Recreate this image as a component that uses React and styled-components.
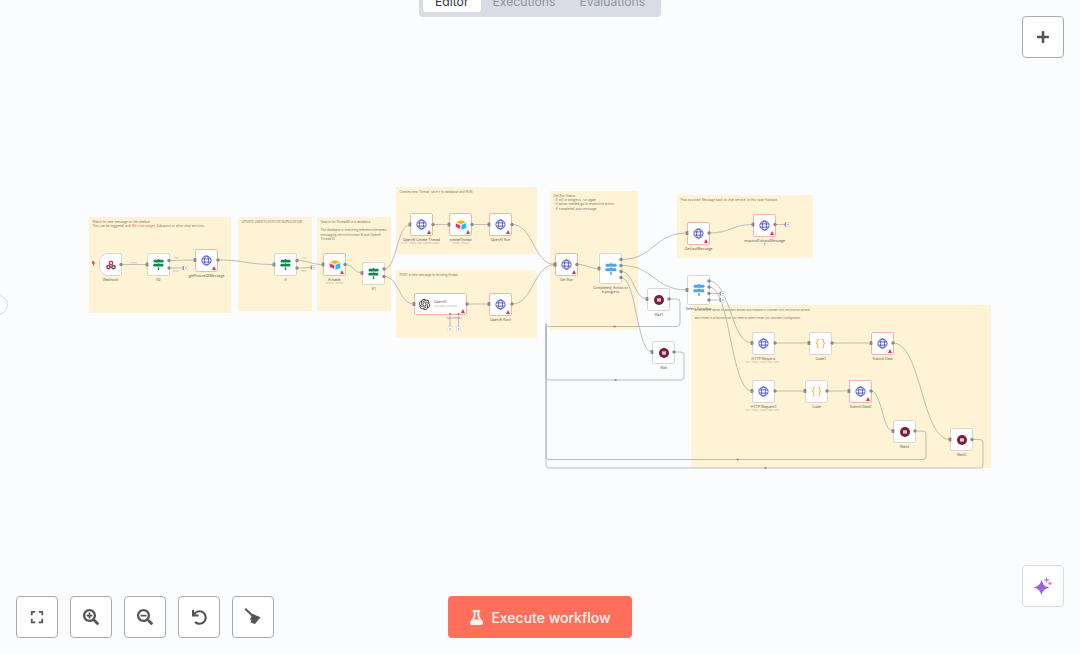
import React from 'react';
import styled, { createGlobalStyle } from 'styled-components';
import {
    FaExpand,
    FaSearchPlus,
    FaSearchMinus,
    FaUndo,
    FaPlus,
    FaFlask,
    FaMapSigns,
    FaBolt,
    FaPause,
} from 'react-icons/fa';
import { SiOpenai } from 'react-icons/si';

const Accent = styled.span`
    color: #e8604f;
`;

const notes = [
    { x: 89, y: 217, w: 142, h: 96, lines: ['Watch for new message on the chatbot', <>This can be triggered with <Accent>Mfr chat widget</Accent>, Subspecs or other chat services.</>] },
    { x: 238, y: 217, w: 74, h: 94, lines: ['UPDATE USER FILTER FOR DUPLICATION'] },
    { x: 317, y: 217, w: 74, h: 94, lines: ['Search for ThreadID in a database', '\u00a0', 'The database is matching reference between messaging service/contact & and OpenAI Thread ID.'] },
    { x: 396, y: 187, w: 141, h: 67, lines: ['Creates new Thread, save it to database and RUN'] },
    { x: 396, y: 270, w: 141, h: 68, lines: ['POST a new message to existing thread'] },
    { x: 550, y: 191, w: 88, h: 139, lines: ['Get Run Status:', '- If still in progress, run again', '- If action needed go to respective action', '- If completed, post message'] },
    { x: 677, y: 195, w: 136, h: 63, lines: ['Post assistant Message back to chat service. In this case Hubspot'] },
    { x: 691, y: 305, w: 300, h: 163, small: true, lines: ['Select a form based on assistant answer and respond to Assistant with the function answer.', '\u00a0', 'Each model is a function that you need to define inside your assistant configuration.'] },
];

const nodes = [
    { x: 99, y: 253, icon: 'webhook', label: 'Webhook', trigger: true },
    { x: 147, y: 253, icon: 'if', label: 'If2' },
    { x: 195, y: 249, icon: 'globe', label: 'getPictureOfMessage', error: true },
    { x: 274, y: 253, icon: 'if', label: 'If' },
    { x: 323, y: 253, icon: 'airtable', label: 'Airtable', sub: 'search: record', error: true },
    { x: 362, y: 262, icon: 'if', label: 'If1' },
    { x: 410, y: 213, icon: 'globe', label: 'OpenAI Create Thread', sub: 'POST: https://api.openai.com/v...', error: true },
    { x: 449, y: 213, icon: 'airtable', label: 'createThread', sub: 'create: record', error: true },
    { x: 489, y: 213, icon: 'globe', label: 'OpenAI Run', error: true },
    { x: 489, y: 293, icon: 'globe', label: 'OpenAI Run1', error: true },
    { x: 555, y: 253, icon: 'globe', label: 'Get Run', error: true },
    { x: 599, y: 253, h: 31, icon: 'switch', label: 'Completed, Action or\nInprogress' },
    { x: 647, y: 288, icon: 'wait', label: 'Wait1' },
    { x: 652, y: 341, icon: 'wait', label: 'Wait' },
    { x: 687, y: 222, icon: 'globe', label: 'GetLastMessage', error: true },
    { x: 753, y: 214, icon: 'globe', label: 'respondToInputMessage\n1', error: true },
    { x: 687, y: 275, h: 30, icon: 'switch', label: 'Select Function' },
    { x: 752, y: 332, icon: 'globe', label: 'HTTP Request', sub: 'GET: https://www.tidio.com/...' },
    { x: 809, y: 332, icon: 'code', label: 'Code1' },
    { x: 871, y: 332, icon: 'globe', label: 'Submit Data', error: true },
    { x: 752, y: 380, icon: 'globe', label: 'HTTP Request1', sub: 'GET: https://www.tidio.com/...' },
    { x: 805, y: 380, icon: 'code', label: 'Code' },
    { x: 849, y: 380, icon: 'globe', label: 'Submit Data1', error: true },
    { x: 893, y: 420, icon: 'wait', label: 'Wait3' },
    { x: 950, y: 428, icon: 'wait', label: 'Wait2' },
];

const wires = [
    [121, 264.5, 147, 264.5],
    [169, 260.5, 195, 260],
    [169, 268, 184, 268],
    [218, 260, 274, 264.5],
    [297, 260.5, 323, 264.5],
    [297, 268, 312, 267.5],
    [345, 264.5, 362, 273],
    [384, 269, 410, 224.5],
    [384, 276.5, 414, 304],
    [433, 224.5, 449, 224.5],
    [472, 224.5, 489, 224.5],
    [512, 224.5, 555, 264.5],
    [467, 304, 489, 304],
    [512, 304, 555, 264.5],
    [577, 264.5, 599, 268.5],
    [621, 259.5, 687, 233],
    [621, 265.5, 687, 290],
    [621, 271.5, 647, 299],
    [621, 277.5, 652, 352],
    [709, 233, 753, 224.5],
    [775, 224.5, 786, 224.5],
    [709, 281, 752, 343],
    [709, 287, 752, 391],
    [709, 293.5, 721, 293.5],
    [709, 300, 721, 300],
    [775, 343, 809, 343],
    [832, 343, 871, 343],
    [775, 391, 805, 391],
    [827, 391, 849, 391],
    [893, 343, 950, 439.5],
    [871, 391, 893, 431],
];

const loops = [
    [669, 299, 680, 326.5, 546],
    [674, 352, 684, 380, 546],
    [915, 431, 926, 459.5, 546],
    [972, 439.5, 983, 468, 546],
];

const pluses = [
    [186, 268],
    [314, 267.5],
    [788, 224.5],
    [723, 293.5],
    [723, 300],
    [450, 329],
    [458.5, 329],
];

const arrows = [
    [614, 326.5],
    [615, 380],
    [737, 459.5],
    [765, 468],
];

const wireLabels = [
    { x: 174, y: 257, text: 'true' },
    { x: 173, y: 270, text: 'false' },
    { x: 302, y: 257, text: 'true' },
    { x: 301, y: 270, text: 'false' },
    { x: 130, y: 262, text: '1 item' },
];

const curve = ([x1, y1, x2, y2]) => {
    const bend = Math.max(Math.abs(x2 - x1) / 2, 6);
    return `M${x1} ${y1} C${x1 + bend} ${y1} ${x2 - bend} ${y2} ${x2} ${y2}`;
};

const loopPath = ([x, y, right, bottom, left]) =>
    `M${x} ${y} H${right - 3} Q${right} ${y} ${right} ${y + 3} V${bottom - 3} Q${right} ${bottom} ${right - 3} ${bottom} H${left + 3} Q${left} ${bottom} ${left} ${bottom - 3} V326`;

function GlobeIcon() {
    return (
        <svg width="11" height="11" viewBox="0 0 24 24" fill="none" stroke="#4a4fcf" strokeWidth="2">
            <circle cx="12" cy="12" r="10" />
            <ellipse cx="12" cy="12" rx="4.5" ry="10" />
            <path d="M3 8.5h18M3 15.5h18" />
        </svg>
    );
}

function WebhookIcon() {
    return (
        <svg width="10" height="10" viewBox="0 0 24 24" fill="none" strokeWidth="3.4">
            <circle cx="12" cy="7" r="4" stroke="#c1426a" />
            <circle cx="6" cy="17" r="4" stroke="#8a3a72" />
            <circle cx="18" cy="17" r="4" stroke="#4a4a55" />
            <path d="M10 10l-3 5M8 17h7M14 10l3 5" stroke="#c1426a" />
        </svg>
    );
}

function AirtableIcon() {
    return (
        <svg width="12" height="11" viewBox="0 0 24 22">
            <path d="M2 6.5L11.5 2.6a2 2 0 0 1 1.3 0L22 6.5 12.3 10.2z" fill="#fcb400" />
            <path d="M13 12l9.5-3.8V18L13 21.6z" fill="#18bfff" />
            <path d="M1.5 8.5L10.5 13 10.5 20 1.5 15.5z" fill="#f82b60" />
        </svg>
    );
}

function BracesIcon() {
    return (
        <svg width="11" height="11" viewBox="0 0 24 24" fill="none" stroke="#ff9b26" strokeWidth="2" strokeLinecap="round">
            <path d="M8 3H7a2 2 0 0 0-2 2v5a2 2 0 0 1-2 2 2 2 0 0 1 2 2v5a2 2 0 0 0 2 2h1" />
            <path d="M16 21h1a2 2 0 0 0 2-2v-5a2 2 0 0 1 2-2 2 2 0 0 1-2-2V5a2 2 0 0 0-2-2h-1" />
        </svg>
    );
}

function SparkleIcon() {
    return (
        <svg width="24" height="24" viewBox="0 0 24 24">
            <defs>
                <linearGradient id="spark" x1="0" y1="0" x2="1" y2="1">
                    <stop offset="0" stopColor="#7a5ee6" />
                    <stop offset="1" stopColor="#b868e0" />
                </linearGradient>
            </defs>
            <path d="M10.5 5.5Q11.300 8.800 12.700 10.800T18.500 13.500Q15 14.300 13 16.200T10.500 21.500Q9.700 18.200 8 16.200T2.500 13.500Q6 12.700 8 10.800T10.500 5.500z" fill="url(#spark)" />
            <path d="M15.700 3.400v5.200M13.100 6h5.200" stroke="#a565dc" strokeWidth="1" />
            <circle cx="19" cy="9.300" r="1.600" fill="#df7fc8" />
        </svg>
    );
}

function BroomIcon() {
    return (
        <svg width="18" height="18" viewBox="0 0 18 18">
            <path d="M1.700 1.300L8.300 7.500" stroke="#555" strokeWidth="2" strokeLinecap="round" />
            <path d="M8.500 5.800L16.500 9.300 11 16 6.500 14.500 7.500 11.500 5.800 12.500z" fill="#555" />
        </svg>
    );
}

const GlobalStyle = createGlobalStyle`
    html, body {
        margin: 0;
        padding: 0;
        background: #fbfcfe;
    }
`;

const Canvas = styled.div`
    position: relative;
    width: 1080px;
    height: 654px;
    overflow: hidden;
    background: #fbfcfe;
    font-family: Inter, 'Liberation Sans', sans-serif;
`;

const Note = styled.div`
    position: absolute;
    left: ${(p) => p.$x}px;
    top: ${(p) => p.$y}px;
    width: ${(p) => p.$w}px;
    height: ${(p) => p.$h}px;
    box-sizing: border-box;
    padding: 3px 3.5px;
    background: #fff3d5;
    border-radius: 1px;
    color: #7b7462;
    font-size: ${(p) => (p.$small ? 2.7 : 3.1)}px;
    line-height: 4.2px;
`;

const Wires = styled.svg`
    position: absolute;
    left: 0;
    top: 0;
    fill: none;
    stroke: #a3a3a3;
    stroke-width: 0.7;
`;

const Ports = styled.svg`
    position: absolute;
    left: 0;
    top: 0;
    fill: #8a8a8a;

    .plus {
        fill: #fff;
        stroke: #c4c4c4;
        stroke-width: 0.4;
    }

    .cross {
        fill: none;
        stroke: #8a8a8a;
        stroke-width: 0.4;
    }
`;

const WireLabel = styled.span`
    position: absolute;
    left: ${(p) => p.$x}px;
    top: ${(p) => p.$y}px;
    color: #c4bca6;
    font-size: 2.4px;
    line-height: 3px;
`;

const TriggerBolt = styled.div`
    position: absolute;
    left: 91px;
    top: 261px;
    display: flex;
`;

const NodeSlot = styled.div`
    position: absolute;
    left: ${(p) => p.$x}px;
    top: ${(p) => p.$y}px;
    width: 23px;
    display: flex;
    flex-direction: column;
    align-items: center;
`;

const NodeBox = styled.div`
    position: relative;
    width: 23px;
    height: ${(p) => p.$h}px;
    flex-shrink: 0;
    box-sizing: border-box;
    display: flex;
    align-items: center;
    justify-content: center;
    background: #fff;
    border: 1.5px solid ${(p) => (p.$error ? '#f4b4a8' : '#d9d7d0')};
    border-radius: ${(p) => (p.$trigger ? '9px 2px 2px 9px' : '2px')};
`;

const ErrorMark = styled.span`
    position: absolute;
    right: 1px;
    bottom: 1px;
    width: 0;
    height: 0;
    border-left: 2.2px solid transparent;
    border-right: 2.2px solid transparent;
    border-bottom: 4px solid #e0344c;
`;

const WaitBadge = styled.span`
    width: 10px;
    height: 10px;
    border-radius: 50%;
    background: #7a1e3c;
    display: flex;
    align-items: center;
    justify-content: center;
`;

const NodeLabel = styled.div`
    margin-top: 2px;
    width: 46px;
    flex-shrink: 0;
    text-align: center;
    color: #5f5c54;
    font-size: 3.5px;
    line-height: 4.2px;
    white-space: pre-line;
`;

const NodeSub = styled.div`
    flex-shrink: 0;
    color: #bcb7aa;
    font-size: 2.6px;
    line-height: 3.4px;
    white-space: nowrap;
`;

const WideNode = styled.div`
    position: absolute;
    left: 414px;
    top: 293px;
    width: 53px;
    height: 22px;
    box-sizing: border-box;
    padding-left: 4px;
    display: flex;
    align-items: center;
    gap: 4px;
    background: #fff;
    border: 1.5px solid #f4b4a8;
    border-radius: 2px;
`;

const WideText = styled.div`
    display: flex;
    flex-direction: column;
`;

const WideTitle = styled.div`
    color: #5f5c54;
    font-size: 3.5px;
    line-height: 5px;
`;

const ToolsLabel = styled.div`
    position: absolute;
    left: 446px;
    top: 317px;
    color: #8f8cc0;
    font-size: 2.4px;
    line-height: 3px;
    white-space: nowrap;
`;

const SideToggle = styled.div`
    position: absolute;
    left: -12px;
    top: 295px;
    width: 20px;
    height: 20px;
    box-sizing: border-box;
    border: 1px solid #d6d8de;
    border-radius: 50%;
    background: #fdfdfe;
`;

const Tabs = styled.div`
    position: absolute;
    left: 419px;
    top: -14px;
    width: 242px;
    height: 30.5px;
    box-sizing: border-box;
    padding: 4px;
    display: flex;
    background: #d9dce5;
    border-radius: 4px;
`;

const Tab = styled.div`
    height: 22px;
    padding: 0 12px;
    display: flex;
    align-items: center;
    border-radius: 3px;
    background: ${(p) => (p.$active ? '#fff' : 'transparent')};
    color: ${(p) => (p.$active ? '#333' : '#8f93a2')};
    font-size: 12.2px;
`;

const SquareButton = styled.button`
    width: 42px;
    height: 42px;
    padding: 0;
    display: flex;
    align-items: center;
    justify-content: center;
    box-sizing: border-box;
    background: #fff;
    border: 1px solid #aaa;
    border-radius: 4px;
    color: #555;
`;

const AddButton = styled(SquareButton)`
    position: absolute;
    right: 16px;
    top: 16px;
`;

const AskButton = styled(SquareButton)`
    position: absolute;
    right: 16px;
    top: 565px;
    border-color: #d9d9de;
`;

const Toolbar = styled.div`
    position: absolute;
    left: 16px;
    bottom: 16px;
    display: flex;
    gap: 12px;
`;

const ExecuteButton = styled.button`
    position: absolute;
    left: 448px;
    top: 596px;
    width: 184px;
    height: 42px;
    display: flex;
    align-items: center;
    justify-content: center;
    gap: 7px;
    border: none;
    border-radius: 4px;
    background: #ff6f5c;
    color: #fff6f3;
    font-family: Inter, 'Liberation Sans', sans-serif;
    font-size: 14px;
    font-weight: 500;
`;

const renderIcon = (icon) => {
    switch (icon) {
        case 'globe':
            return <GlobeIcon />;
        case 'webhook':
            return <WebhookIcon />;
        case 'airtable':
            return <AirtableIcon />;
        case 'code':
            return <BracesIcon />;
        case 'if':
            return <FaMapSigns size={11} color="#0e8a4e" />;
        case 'switch':
            return <FaMapSigns size={12} color="#4aa6f0" />;
        case 'wait':
            return (
                <WaitBadge>
                    <FaPause size={4} color="#fff" />
                </WaitBadge>
            );
        default:
            return null;
    }
};

function WorkflowNode({ x, y, h = 23, icon, label, sub, error, trigger }) {
    return (
        <NodeSlot $x={x} $y={y}>
            <NodeBox $h={h} $error={error} $trigger={trigger}>
                {renderIcon(icon)}
                {error && <ErrorMark />}
            </NodeBox>
            <NodeLabel>{label}</NodeLabel>
            {sub && <NodeSub>{sub}</NodeSub>}
        </NodeSlot>
    );
}

function App() {
    return (
        <Canvas>
            <GlobalStyle />
            {notes.map((note) => (
                <Note key={`${note.x}-${note.y}`} $x={note.x} $y={note.y} $w={note.w} $h={note.h} $small={note.small}>
                    {note.lines.map((line, i) => (
                        <div key={i}>{line}</div>
                    ))}
                </Note>
            ))}

            <Wires width="1080" height="654" viewBox="0 0 1080 654">
                {wires.map((wire) => (
                    <path key={wire.join()} d={curve(wire)} />
                ))}
                {loops.map((loop) => (
                    <path key={loop.join()} d={loopPath(loop)} />
                ))}
                <path d="M450 316V327M458.5 316V327" />
            </Wires>

            {wireLabels.map((item) => (
                <WireLabel key={`${item.x}-${item.y}`} $x={item.x} $y={item.y}>
                    {item.text}
                </WireLabel>
            ))}

            <TriggerBolt>
                <FaBolt size={5} color="#e8485f" />
            </TriggerBolt>

            {nodes.map((node) => (
                <WorkflowNode key={node.label} {...node} />
            ))}

            <WideNode>
                <SiOpenai size={11} color="#222" />
                <WideText>
                    <WideTitle>OpenAI</WideTitle>
                    <NodeSub>Message Assistant</NodeSub>
                </WideText>
                <ErrorMark />
            </WideNode>
            <ToolsLabel>Tools Memory</ToolsLabel>

            <Ports width="1080" height="654" viewBox="0 0 1080 654">
                {wires.map(([x1, y1, x2, y2]) => (
                    <g key={`${x1}-${y1}-${x2}`}>
                        <circle cx={x1} cy={y1} r="1.7" />
                        <rect x={x2 - 1.4} y={y2 - 1.9} width="2.8" height="3.8" />
                    </g>
                ))}
                {loops.map(([x, y]) => (
                    <circle key={`${x}-${y}`} cx={x} cy={y} r="1.7" />
                ))}
                {arrows.map(([x, y]) => (
                    <path key={`${x}-${y}`} d={`M${x - 1.5} ${y}l3 -1.3v2.6z`} />
                ))}
                <path d="M450 312.8l1.3 1.3-1.3 1.3-1.3-1.3zM458.5 312.8l1.3 1.3-1.3 1.3-1.3-1.3z" fill="#7d82c8" />
                {pluses.map(([x, y]) => (
                    <g key={`${x}-${y}`}>
                        <rect className="plus" x={x - 2} y={y - 2} width="4" height="4" rx="0.5" />
                        <path className="cross" d={`M${x - 1} ${y}h2M${x} ${y - 1}v2`} />
                    </g>
                ))}
            </Ports>

            <SideToggle />

            <Tabs>
                <Tab $active>Editor</Tab>
                <Tab>Executions</Tab>
                <Tab>Evaluations</Tab>
            </Tabs>

            <AddButton>
                <FaPlus size={14} />
            </AddButton>
            <AskButton>
                <SparkleIcon />
            </AskButton>

            <Toolbar>
                <SquareButton>
                    <FaExpand size={14} />
                </SquareButton>
                <SquareButton>
                    <FaSearchPlus size={16} />
                </SquareButton>
                <SquareButton>
                    <FaSearchMinus size={16} />
                </SquareButton>
                <SquareButton>
                    <FaUndo size={15} />
                </SquareButton>
                <SquareButton>
                    <BroomIcon />
                </SquareButton>
            </Toolbar>

            <ExecuteButton>
                <FaFlask size={15} />
                Execute workflow
            </ExecuteButton>
        </Canvas>
    );
}

export default App;
